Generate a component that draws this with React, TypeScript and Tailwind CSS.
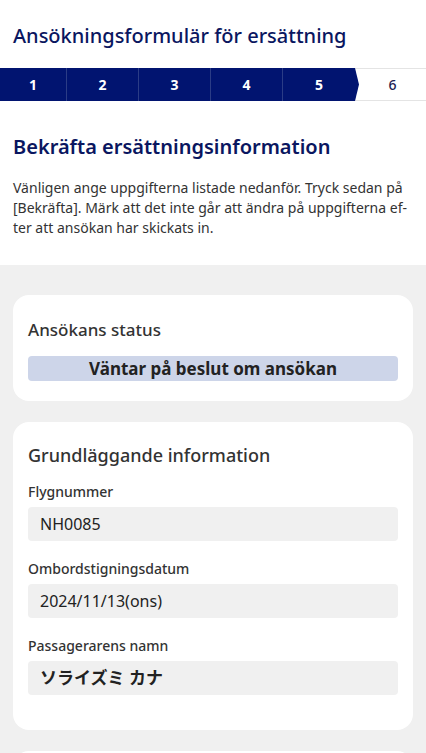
import React from "react";

const font = { fontFamily: '"Noto Sans", "Open Sans", "Noto Sans CJK JP", sans-serif' };

function Field({ label, value, jp }: { label: string; value: string; jp?: boolean }) {
  return (
    <div className="flex flex-col">
      <div className="text-[14px] leading-[20px] font-medium text-[#333]">{label}</div>
      <div
        className={
          "mt-[5px] h-[34px] rounded-[4px] bg-[#f0f0f0] px-[12px] flex items-center text-[#222] " +
          (jp ? "text-[17px] font-bold" : "text-[16px]")
        }
      >
        {value}
      </div>
    </div>
  );
}

export default function App() {
  const steps = ["1", "2", "3", "4"];
  return (
    <div className="w-[426px] min-h-[753px] bg-[#f0f0f0]" style={font}>
      <div className="bg-white">
        <div className="px-[13px] pt-[22px] pb-[18px]">
          <h1 className="text-[20px] leading-[28px] font-medium text-[#0a1660]">
            Ansökningsformulär för ersättning
          </h1>
        </div>
        <div className="flex h-[33px] border-y border-[#e4e4e4]">
          {steps.map((s, i) => (
            <div
              key={s}
              className={
                "-my-px flex items-center justify-center bg-[#011470] text-white text-[14px] font-bold border-r border-[#2b3c86] " +
                (i === 0 ? "w-[67px]" : "w-[72px]")
              }
            >
              {s}
            </div>
          ))}
          <div className="-my-px w-[76px] pr-[4px] flex items-center justify-center bg-[#011470] text-white text-[14px] font-bold [clip-path:polygon(0_0,calc(100%_-_4px)_0,100%_50%,calc(100%_-_4px)_100%,0_100%)]">
            5
          </div>
          <div className="flex-1 flex items-center justify-center text-[14px] font-medium text-[#1a2050]">
            6
          </div>
        </div>
        <div className="px-[13px] pt-[32px] pb-[27px]">
          <h2 className="text-[20px] leading-[28px] font-semibold text-[#0a1660]">
            Bekräfta ersättningsinformation
          </h2>
          <p className="mt-[17px] text-[14px] leading-[20px] text-[#333]">
            Vänligen ange uppgifterna listade nedanför. Tryck sedan på [Bekräfta]. Märk att det inte går att ändra på uppgifterna ef{"\u00AD"}ter att ansökan har skickats in.
          </p>
        </div>
      </div>

      <div className="px-[13px] pt-[30px] flex flex-col gap-[21px]">
        <div className="bg-white rounded-[16px] px-[15px] pt-[23px] pb-[20px]">
          <div className="text-[17px] leading-[24px] font-medium text-[#333]">Ansökans status</div>
          <div className="mt-[14px] h-[25px] rounded-[4px] bg-[#cdd5e9] flex items-center justify-center text-[17px] font-bold text-[#222]">
            Väntar på beslut om ansökan
          </div>
        </div>

        <div className="bg-white rounded-[16px] px-[15px] pt-[21px] pb-[35px]">
          <div className="text-[18px] leading-[24px] font-medium text-[#333]">Grundläggande information</div>
          <div className="mt-[15px] flex flex-col gap-[18px]">
            <Field label="Flygnummer" value="NH0085" />
            <Field label="Ombordstigningsdatum" value="2024/11/13(ons)" />
            <Field label="Passagerarens namn" value="ソライズミ カナ" jp />
          </div>
        </div>

        <div className="bg-white rounded-[16px] h-[80px]" />
      </div>
    </div>
  );
}
